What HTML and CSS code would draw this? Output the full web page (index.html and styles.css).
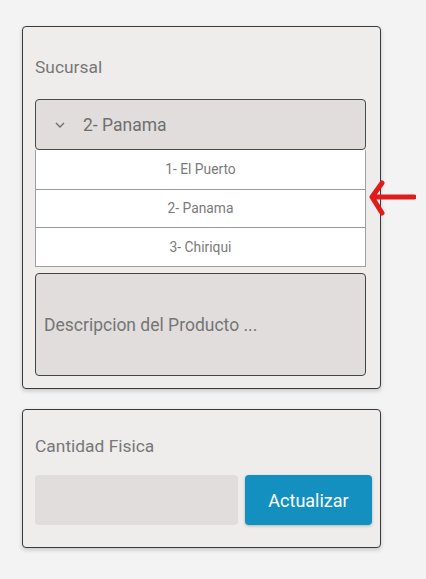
FILE: index.html
```html
<!DOCTYPE html>
<html lang="es">
<head>
<meta charset="utf-8">
<link rel="stylesheet" href="styles.css">
</head>
<body>
<main class="page">
  <section class="card card-top">
    <div class="label label-sucursal">Sucursal</div>
    <div class="select-wrap">
      <div class="select">
        <svg class="chev" width="12" height="8" viewBox="0 0 12 8"><path d="M2 2 L6 6 L10 2" fill="none" stroke="#6f6f6f" stroke-width="1.4"/></svg>
        <span class="select-value">2- Panama</span>
      </div>
      <ul class="dropdown">
        <li class="option">1- El Puerto</li>
        <li class="option">2- Panama</li>
        <li class="option">3- Chiriqui</li>
      </ul>
      <svg class="pointer" width="48" height="40" viewBox="0 0 48 40"><path d="M14 4 L4 18 L14 34 M6 18 L46 18" fill="none" stroke="#e01b1b" stroke-width="5" stroke-linecap="round" stroke-linejoin="round"/></svg>
    </div>
    <div class="hidden-area">
      <div class="label ghost-label">Codigo de Barras</div>
    </div>
    <div class="desc">Descripcion del Producto ...</div>
  </section>
  <section class="card card-bottom">
    <div class="label label-cantidad">Cantidad Fisica</div>
    <div class="row">
      <div class="qty"></div>
      <button class="btn">Actualizar</button>
    </div>
  </section>
</main>
</body>
</html>
```
FILE: styles.css
```css
* { box-sizing: border-box; }
html, body { margin: 0; padding: 0; }
body {
  background: #f3f3f3;
  font-family: Roboto, "Noto Sans", sans-serif;
  width: 426px;
  height: 579px;
  overflow: hidden;
}
.page {
  padding: 26px 0 0 22px;
  display: flex;
  flex-direction: column;
  gap: 20px;
}
.card {
  width: 359px;
  background: #efedec;
  border: 1px solid #3a3a3a;
  border-radius: 4px;
  box-shadow: 0 2px 4px rgba(0,0,0,0.18);
  padding: 0 14px 0 12px;
}
.card-top { padding-top: 29px; padding-bottom: 12px; }
.card-bottom { padding-top: 25px; padding-bottom: 22px; padding-right: 8px; }
.label {
  font-size: 17.4px;
  line-height: 22px;
  color: #777;
}
.label-sucursal { margin-bottom: 21px; }
.label-cantidad { margin-bottom: 18px; }
.select-wrap { position: relative; }
.select {
  height: 51px;
  background: #e0dddc;
  border: 1px solid #4a4a4a;
  border-radius: 4px;
  display: flex;
  align-items: center;
  padding-left: 18px;
}
.chev { margin-right: 17px; }
.select-value {
  font-size: 17.5px;
  color: #6f6f6f;
}
.dropdown {
  position: absolute;
  left: 0;
  right: 0;
  top: 51px;
  margin: 0;
  padding: 0;
  list-style: none;
  background: #fff;
  border: 1px solid #a0a0a0;
  border-top: none;
  z-index: 2;
}
.option {
  height: 38.5px;
  display: flex;
  align-items: center;
  justify-content: center;
  font-size: 13.8px;
  color: #7a7a7a;
}
.option + .option { border-top: 1px solid #999; }
.pointer {
  position: absolute;
  left: 333px;
  top: 80px;
  z-index: 3;
}
.hidden-area {
  height: 123px;
  padding-top: 30px;
}
.ghost-label { padding-left: 10px; }
.desc {
  height: 103px;
  background: #e0dddc;
  border: 1px solid #444;
  border-radius: 4px;
  display: flex;
  align-items: center;
  padding-left: 8px;
  font-size: 17.5px;
  color: #757575;
}
.row {
  display: flex;
  gap: 7px;
}
.qty {
  width: 203px;
  height: 50px;
  background: #e0dddc;
  border-radius: 4px;
}
.btn {
  flex: 1;
  height: 50px;
  background: #1490c0;
  color: #fff;
  border: none;
  border-radius: 4px;
  font-family: Roboto, "Noto Sans", sans-serif;
  font-size: 18px;
  box-shadow: 0 1px 3px rgba(0,0,0,0.25);
}
```
